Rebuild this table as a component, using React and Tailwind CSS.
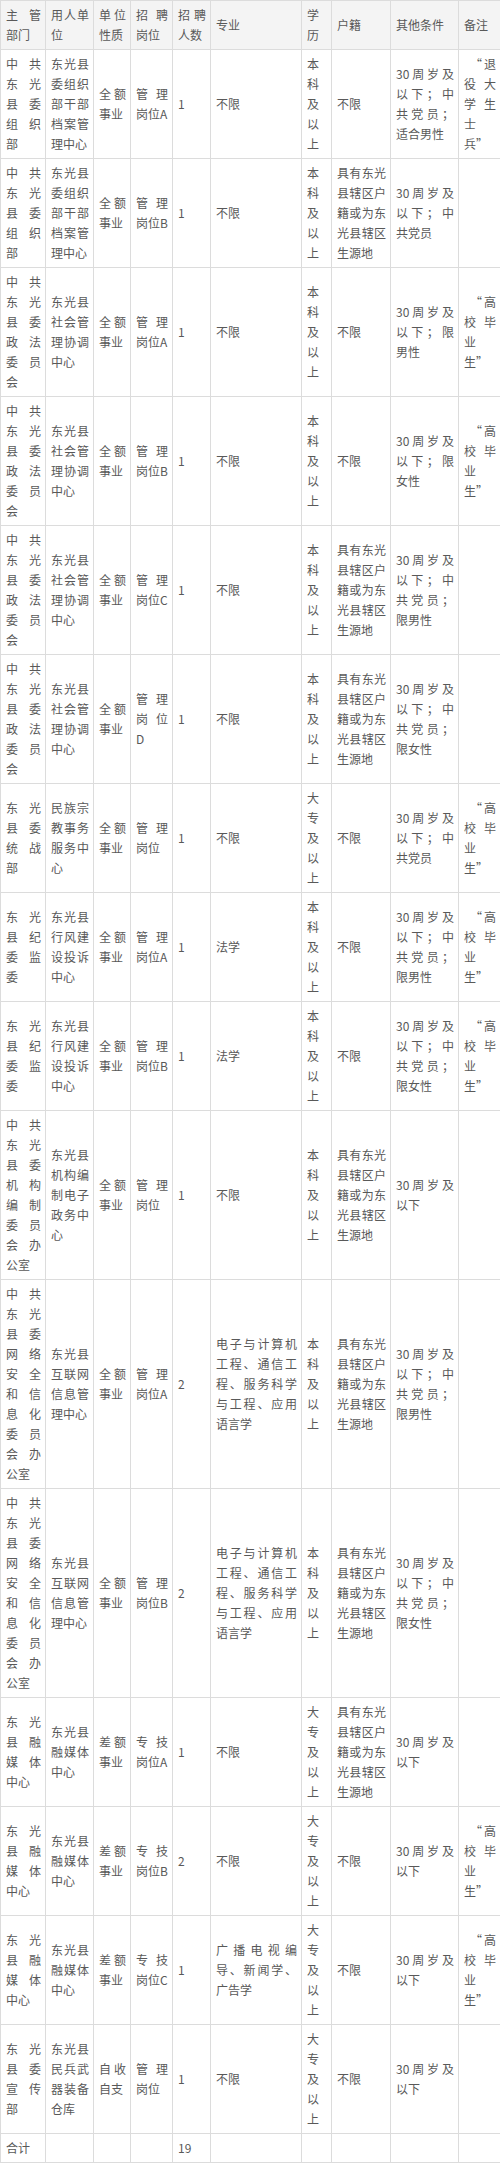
const HUJI = '具有东光县辖区户籍或为东光县辖区生源地'
const GAOXIAO = '“高校毕业生”'

const heads = ['主管部门', '用人单位', '单位性质', '招聘岗位', '招聘人数', '专业', '学历', '户籍', '其他条件', '备注']
const widths = ['w-[45px]', 'w-[48px]', 'w-[37px]', 'w-[42px]', 'w-[38px]', 'w-[91px]', 'w-[30px]', 'w-[59px]', 'w-[68px]', 'w-[42px]']

const rows = [
  ['中共东光县委组织部', '东光县委组织部干部档案管理中心', '全额事业', '管理岗位A', '1', '不限', '本科及以上', '不限', '30周岁及以下；中共党员；适合男性', '“退役大学生士兵”'],
  ['中共东光县委组织部', '东光县委组织部干部档案管理中心', '全额事业', '管理岗位B', '1', '不限', '本科及以上', HUJI, '30周岁及以下；中共党员', ''],
  ['中共东光县委政法委员会', '东光县社会管理协调中心', '全额事业', '管理岗位A', '1', '不限', '本科及以上', '不限', '30周岁及以下；限男性', GAOXIAO],
  ['中共东光县委政法委员会', '东光县社会管理协调中心', '全额事业', '管理岗位B', '1', '不限', '本科及以上', '不限', '30周岁及以下；限女性', GAOXIAO],
  ['中共东光县委政法委员会', '东光县社会管理协调中心', '全额事业', '管理岗位C', '1', '不限', '本科及以上', HUJI, '30周岁及以下；中共党员；限男性', ''],
  ['中共东光县委政法委员会', '东光县社会管理协调中心', '全额事业', '管理岗位D', '1', '不限', '本科及以上', HUJI, '30周岁及以下；中共党员；限女性', ''],
  ['东光县委统战部', '民族宗教事务服务中心', '全额事业', '管理岗位', '1', '不限', '大专及以上', '不限', '30周岁及以下；中共党员', GAOXIAO],
  ['东光县纪委监委', '东光县行风建设投诉中心', '全额事业', '管理岗位A', '1', '法学', '本科及以上', '不限', '30周岁及以下；中共党员；限男性', GAOXIAO],
  ['东光县纪委监委', '东光县行风建设投诉中心', '全额事业', '管理岗位B', '1', '法学', '本科及以上', '不限', '30周岁及以下；中共党员；限女性', GAOXIAO],
  ['中共东光县委机构编制委员会办公室', '东光县机构编制电子政务中心', '全额事业', '管理岗位', '1', '不限', '本科及以上', HUJI, '30周岁及以下', ''],
  ['中共东光县委网络安全和信息化委员会办公室', '东光县互联网信息管理中心', '全额事业', '管理岗位A', '2', '电子与计算机工程、通信工程、服务科学与工程、应用语言学', '本科及以上', HUJI, '30周岁及以下；中共党员；限男性', ''],
  ['中共东光县委网络安全和信息化委员会办公室', '东光县互联网信息管理中心', '全额事业', '管理岗位B', '2', '电子与计算机工程、通信工程、服务科学与工程、应用语言学', '本科及以上', HUJI, '30周岁及以下；中共党员；限女性', ''],
  ['东光县融媒体中心', '东光县融媒体中心', '差额事业', '专技岗位A', '1', '不限', '大专及以上', HUJI, '30周岁及以下', ''],
  ['东光县融媒体中心', '东光县融媒体中心', '差额事业', '专技岗位B', '2', '不限', '大专及以上', '不限', '30周岁及以下', GAOXIAO],
  ['东光县融媒体中心', '东光县融媒体中心', '差额事业', '专技岗位C', '1', '广播电视编导、新闻学、广告学', '大专及以上', '不限', '30周岁及以下', GAOXIAO],
  ['东光县委宣传部', '东光县民兵武器装备仓库', '自收自支', '管理岗位', '1', '不限', '大专及以上', '不限', '30周岁及以下', ''],
]

const cell = 'border border-[#dcdcdc] pl-[5px] pr-[4px] py-[4px] align-middle text-justify font-normal break-all'

// quotes in this font are narrow; pad them out to a full em like the original
function Quoted({ text }) {
  if (!text.startsWith('“')) return text
  return (
    <>
      <span className="pl-[6px]">“</span>
      {text.slice(1, -1)}
      <span className="pr-[6px]">”</span>
    </>
  )
}

export default function App() {
  return (
    <div className="w-[500px] bg-white text-[#595959] text-[12px] leading-[20px] font-['Noto_Sans_CJK_SC','Noto_Sans',sans-serif]">
      <table className="w-full table-fixed border-collapse">
        <colgroup>
          {widths.map((w, i) => <col key={i} className={w} />)}
        </colgroup>
        <thead>
          <tr className="bg-[#f4f4f4]">
            {heads.map(h => <th key={h} className={cell}>{h}</th>)}
          </tr>
        </thead>
        <tbody>
          {rows.map((r, i) => (
            <tr key={i}>
              {r.map((c, j) => <td key={j} className={cell}><Quoted text={c} /></td>)}
            </tr>
          ))}
          <tr>
            <td className={cell}>合计</td>
            <td className={cell}></td>
            <td className={cell}></td>
            <td className={cell}></td>
            <td className={cell}>19</td>
            <td className={cell}></td>
            <td className={cell}></td>
            <td className={cell}></td>
            <td className={cell}></td>
            <td className={cell}></td>
          </tr>
        </tbody>
      </table>
    </div>
  )
}
